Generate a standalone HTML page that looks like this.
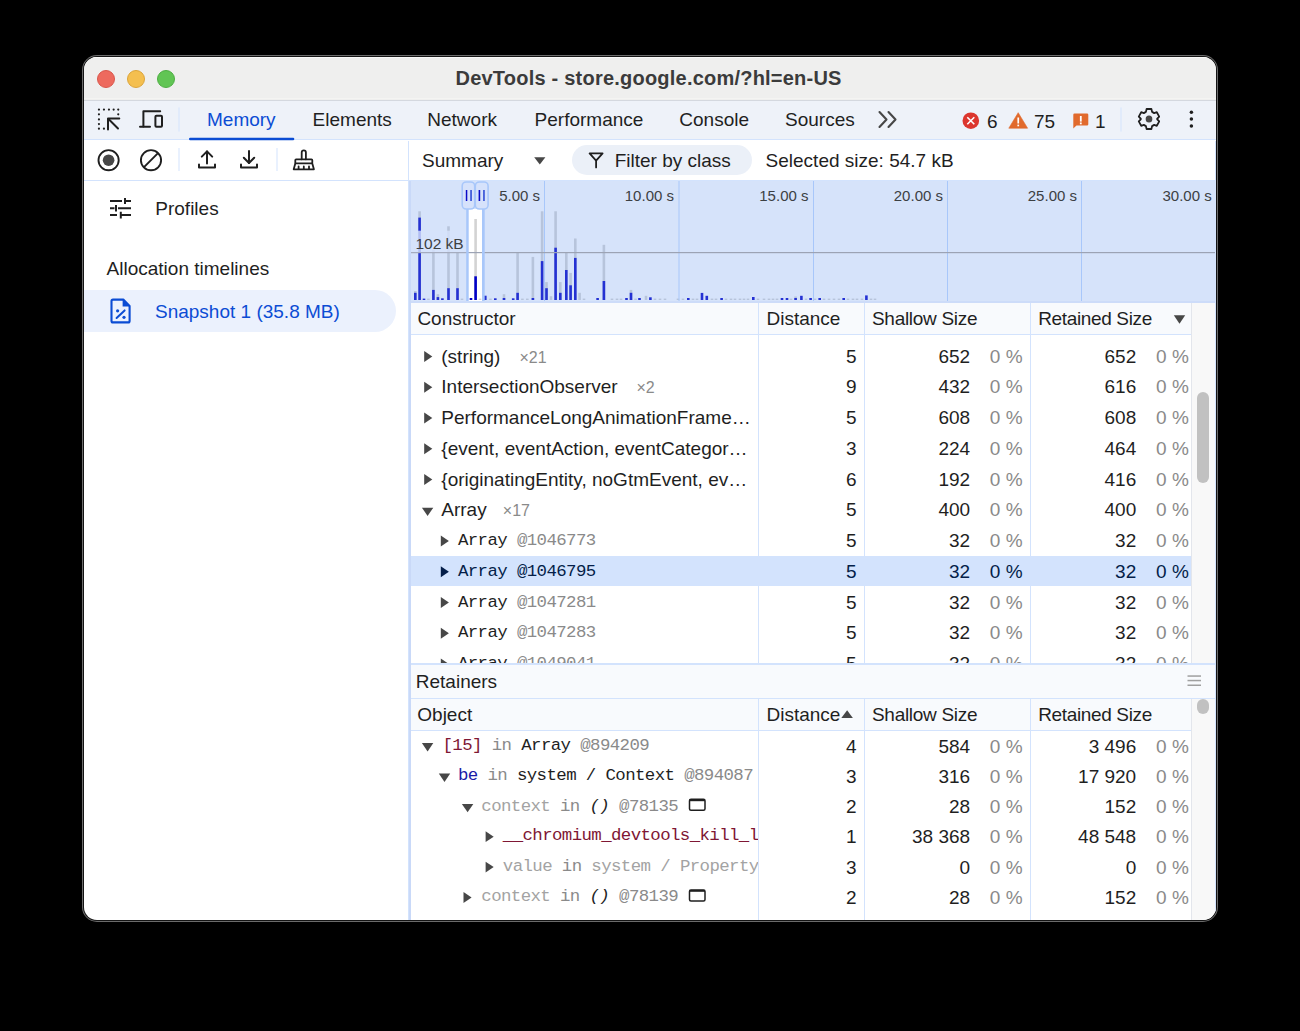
<!DOCTYPE html>
<html><head><meta charset="utf-8">
<style>
html,body{margin:0;padding:0;width:1300px;height:1031px;background:#000;overflow:hidden}
#frame{position:absolute;left:82px;top:55px;width:1136px;height:867px;border-radius:15px;background:#6b6b6b}
#ring{position:absolute;left:1px;top:1px;width:1134px;height:865px;border-radius:14px;background:#141414}
#win{position:absolute;left:1px;top:1px;width:1132px;height:863px;border-radius:13px;overflow:hidden;background:#fff}
#pg{position:absolute;left:-84px;top:-57px;width:1300px;height:1031px}
.a{position:absolute}
.s{position:absolute;font-family:"Liberation Sans",sans-serif;font-size:19px;line-height:22px;white-space:pre;color:#1f1f1f}
.m{position:absolute;font-family:"Liberation Mono",monospace;font-size:17.4px;letter-spacing:-0.6px;line-height:22px;white-space:pre;color:#1f1f1f}
.r{text-align:right}
.g{color:#8a8a8a}
.hl{position:absolute;height:1px;background:#d3e3fd}
.vl{position:absolute;width:1px;background:#d3e3fd}
</style></head><body>
<div id="frame"><div id="ring"><div id="win"><div id="pg">

<!-- title bar -->
<div class="a" style="left:0;top:0;width:1300px;height:100px;background:#efefee"></div>
<div class="a" style="left:84px;top:57px;width:1132px;height:1px;background:#fafafa"></div>
<div class="a" style="left:0;top:98px;width:1300px;height:1px;background:#f4f4f2"></div>
<div class="a" style="left:0;top:100px;width:1300px;height:1px;background:#d4d8df"></div>
<div class="a" style="left:97px;top:69.5px;width:18px;height:18px;border-radius:50%;background:#ed6a5e;box-sizing:border-box;border:0.5px solid #d9574b"></div>
<div class="a" style="left:127px;top:69.5px;width:18px;height:18px;border-radius:50%;background:#f4bf4f;box-sizing:border-box;border:0.5px solid #dba43a"></div>
<div class="a" style="left:157px;top:69.5px;width:18px;height:18px;border-radius:50%;background:#61c554;box-sizing:border-box;border:0.5px solid #4eae43"></div>
<div class="s" style="left:455.5px;top:66.6px;font-weight:bold;font-size:20px;color:#3b3b3b;letter-spacing:0.22px">DevTools - store.google.com/?hl=en-US</div>

<!-- tab bar -->
<div class="a" style="left:0;top:101px;width:1300px;height:38px;background:#eef2f9"></div>
<div class="hl" style="left:0;top:139px;width:1300px"></div>


<!-- tab bar content -->
<svg class="a" style="left:0;top:0" width="1300" height="181" viewBox="0 0 1300 181">
  <g fill="#1f1f1f">
    <circle cx="98.95" cy="109.55" r="1.1"/><circle cx="103.95" cy="109.55" r="1.1"/><circle cx="108.95" cy="109.55" r="1.1"/><circle cx="113.65" cy="109.55" r="1.1"/><circle cx="118.25" cy="109.55" r="1.1"/>
    <circle cx="98.95" cy="114.35" r="1.1"/><circle cx="98.95" cy="119.45" r="1.1"/><circle cx="98.95" cy="124.05" r="1.1"/><circle cx="98.95" cy="128.65" r="1.1"/>
    <circle cx="118.25" cy="114.35" r="1.1"/><circle cx="103.95" cy="128.65" r="1.1"/>
  </g>
  <g stroke="#1f1f1f" stroke-width="2" fill="none" stroke-linecap="round" stroke-linejoin="round">
    <path d="M118 128.5 L108.5 119"/>
    <path d="M119.3 118.6 H108 V129.6"/>
    <path d="M160.2 111.2 H143.4 V126.5"/>
    <path d="M140 126.8 H150"/>
    <rect x="155.4" y="115.8" width="6.6" height="11" rx="1"/>
  </g>
  <rect x="178.5" y="107.5" width="1" height="24" fill="#d3e3fd"/>
  <rect x="189" y="137.8" width="105.3" height="2.4" rx="1.2" fill="#0b4cd4"/>
  <!-- chevrons -->
  <g stroke="#474747" stroke-width="2.1" fill="none" stroke-linecap="round" stroke-linejoin="round">
    <path d="M879.5 112 L886.5 119.5 L879.5 127"/>
    <path d="M888.5 112 L895.5 119.5 L888.5 127"/>
  </g>
  <!-- error -->
  <circle cx="970.8" cy="120.7" r="8.3" fill="#dc362e"/>
  <path d="M967.3 117.2 L974.3 124.2 M974.3 117.2 L967.3 124.2" stroke="#fff" stroke-width="1.6"/>
  <!-- warning -->
  <path d="M1018.2 112.7 L1027.6 128.2 H1008.8 Z" fill="#e16a2d" stroke="#e16a2d" stroke-width="0.6" stroke-linejoin="round"/>
  <rect x="1017.4" y="117.5" width="1.7" height="6" fill="#fff"/><rect x="1017.4" y="124.6" width="1.7" height="1.7" fill="#fff"/>
  <!-- issue -->
  <path d="M1074.5 113.5 H1087 Q1088.3 113.5 1088.3 114.8 V124.3 Q1088.3 125.6 1087 125.6 H1076.5 L1073.3 128.4 V114.8 Q1073.3 113.5 1074.5 113.5 Z" fill="#e16a2d"/>
  <rect x="1079.9" y="116" width="1.8" height="5.6" fill="#fff"/><rect x="1079.9" y="122.5" width="1.8" height="1.8" fill="#fff"/>
  <rect x="1120.5" y="107.5" width="1" height="24" fill="#d3e3fd"/>
  <!-- gear -->
  <g transform="translate(1149 119) scale(0.93 0.98)">
    <path d="M-2.6 -10.2 H2.6 L3.3 -7.3 L5.6 -6 L8.4 -6.9 L11 -2.4 L8.8 -0.3 V0.3 L11 2.4 L8.4 6.9 L5.6 6 L3.3 7.3 L2.6 10.2 H-2.6 L-3.3 7.3 L-5.6 6 L-8.4 6.9 L-11 2.4 L-8.8 0.3 V-0.3 L-11 -2.4 L-8.4 -6.9 L-5.6 -6 L-3.3 -7.3 Z" fill="none" stroke="#1f1f1f" stroke-width="1.9" stroke-linejoin="round"/>
    <circle r="3.6" fill="#474747"/>
  </g>
  <circle cx="1191.4" cy="112.3" r="1.75" fill="#1f1f1f"/><circle cx="1191.4" cy="119.1" r="1.75" fill="#1f1f1f"/><circle cx="1191.4" cy="126" r="1.75" fill="#1f1f1f"/>

  <!-- toolbar -->
  <circle cx="108.6" cy="160.2" r="10.1" fill="none" stroke="#1f1f1f" stroke-width="1.9"/>
  <circle cx="108.6" cy="160.2" r="5.8" fill="#474747"/>
  <circle cx="151" cy="160.2" r="10.1" fill="none" stroke="#1f1f1f" stroke-width="1.9"/>
  <path d="M144 167.2 L158 153.2" stroke="#1f1f1f" stroke-width="1.9"/>
  <rect x="178.5" y="148" width="1" height="23" fill="#d3e3fd"/>
  <g stroke="#1f1f1f" stroke-width="2" fill="none" stroke-linecap="round" stroke-linejoin="round">
    <path d="M199 164.6 V167.6 H215 V164.6"/>
    <path d="M207 163.6 V151.4"/><path d="M201.8 156.6 L207 151.4 L212.2 156.6"/>
    <path d="M241 164.6 V167.6 H257 V164.6"/>
    <path d="M249 151 V163"/><path d="M243.8 157.8 L249 163 L254.2 157.8"/>
  </g>
  <rect x="276.5" y="148" width="1" height="23" fill="#d3e3fd"/>
  <g stroke="#1f1f1f" stroke-width="1.8" fill="none" stroke-linejoin="round" stroke-linecap="round">
    <path d="M301.7 159.3 V152.4 Q301.7 150.4 303.8 150.4 Q305.9 150.4 305.9 152.4 V159.3"/>
    <rect x="295.3" y="159.4" width="17" height="4" rx="0.8"/>
    <path d="M295.3 163.4 L293.7 169.3 H313.9 L312.3 163.4"/>
    <path d="M298.6 166.4 V169 M303.8 166.4 V169 M309 166.4 V169"/>
  </g>
  <!-- summary dropdown -->
  <path d="M534.2 157.2 H545.4 L539.8 164.6 Z" fill="#474747"/>
  <rect x="572" y="145" width="180" height="30" rx="15" fill="#ebf0f8"/>
  <path d="M589.6 153.4 H602.6 L596.1 160.6 Z M596.1 160.6 V167.4" fill="none" stroke="#1f1f1f" stroke-width="1.8" stroke-linejoin="round" stroke-linecap="round"/>
</svg>
<div class="s" style="left:207px;top:109px;color:#0b4cd4">Memory</div>
<div class="s" style="left:312.6px;top:109px">Elements</div>
<div class="s" style="left:427.3px;top:109px">Network</div>
<div class="s" style="left:534.6px;top:109px">Performance</div>
<div class="s" style="left:679.3px;top:109px">Console</div>
<div class="s" style="left:785px;top:109px">Sources</div>
<div class="s" style="left:987px;top:110.5px">6</div>
<div class="s" style="left:1034px;top:110.5px">75</div>
<div class="s" style="left:1095px;top:110.5px">1</div>
<div class="hl" style="left:0;top:180px;width:1300px"></div>
<div class="s" style="left:422px;top:149.5px">Summary</div>
<div class="s" style="left:614.7px;top:149.5px">Filter by class</div>
<div class="s" style="left:765.6px;top:149.5px">Selected size: 54.7 kB</div>
<div class="vl" style="left:408px;top:141px;height:780px"></div>

<!-- sidebar -->
<div class="a" style="left:84px;top:290px;width:311.8px;height:41.6px;border-radius:0 21px 21px 0;background:#ebf1fd"></div>
<svg class="a" style="left:0;top:180px" width="408" height="160" viewBox="0 180 408 160">
  <g stroke="#1f1f1f" stroke-width="2" fill="none">
    <path d="M110 201 H122 M125 198 V204 M125 201 H131"/>
    <path d="M110 208.3 H114.5 M116 205 V211.5 M118 208.3 H131"/>
    <path d="M110 215 H117 M120.8 211.8 V218.5 M120.8 215 H131"/>
  </g>
  <path d="M113 299.6 H123.3 L129.6 305.9 V320.9 Q129.6 322.4 128.1 322.4 H113 Q111.5 322.4 111.5 320.9 V301.1 Q111.5 299.6 113 299.6 Z" fill="none" stroke="#0b4cd4" stroke-width="2.1" stroke-linejoin="round"/>
  <path d="M122.6 299.6 L129.6 306.6 H122.6 Z" fill="#0b4cd4"/>
  <path d="M116.6 318 L124.6 310.4" stroke="#0b4cd4" stroke-width="2" stroke-linecap="round"/>
  <circle cx="117.6" cy="310.8" r="1.6" fill="#0b4cd4"/><circle cx="124" cy="317.3" r="1.6" fill="#0b4cd4"/>
</svg>
<div class="s" style="left:155.3px;top:197.8px">Profiles</div>
<div class="s" style="left:106.6px;top:258.4px">Allocation timelines</div>
<div class="s" style="left:155px;top:301.4px;color:#0b4cd4">Snapshot 1 (35.8 MB)</div>

<!-- overview -->
<svg class="a" style="left:0;top:0" width="1300" height="310" viewBox="0 0 1300 310">
  <rect x="409" y="181" width="807" height="121" fill="#fff"/>
  <rect x="414.0" y="291" width="2.6" height="9.0" fill="#d3d3d3"/>
<rect x="414.0" y="292.8" width="2.6" height="7.2" fill="#0000c8"/>
<rect x="418.3" y="211.3" width="2.6" height="88.7" fill="#d3d3d3"/>
<rect x="418.3" y="217.6" width="2.6" height="82.4" fill="#0000c8"/>
<rect x="422.7" y="298.6" width="2.6" height="1.4" fill="#0000c8"/>
<rect x="427.1" y="298.6" width="2.6" height="1.4" fill="#d3d3d3"/>
<rect x="432.1" y="249.6" width="2.6" height="50.4" fill="#d3d3d3"/>
<rect x="432.1" y="289.9" width="2.6" height="10.1" fill="#0000c8"/>
<rect x="436.6" y="294.2" width="2.6" height="5.8" fill="#d3d3d3"/>
<rect x="436.6" y="297.1" width="2.6" height="2.9" fill="#0000c8"/>
<rect x="441.1" y="298.3" width="2.6" height="1.7" fill="#0000c8"/>
<rect x="447.2" y="226.3" width="2.6" height="73.7" fill="#d3d3d3"/>
<rect x="447.2" y="288.2" width="2.6" height="11.8" fill="#0000c8"/>
<rect x="456.2" y="252.5" width="2.6" height="47.5" fill="#d3d3d3"/>
<rect x="456.2" y="288.2" width="2.6" height="11.8" fill="#0000c8"/>
<rect x="460.7" y="298.6" width="2.6" height="1.4" fill="#d3d3d3"/>
<rect x="469.7" y="298" width="2.6" height="2.0" fill="#0000c8"/>
<rect x="474.3" y="219" width="2.6" height="81.0" fill="#d3d3d3"/>
<rect x="474.3" y="276.3" width="2.6" height="23.7" fill="#0000c8"/>
<rect x="478.7" y="298.6" width="2.6" height="1.4" fill="#d3d3d3"/>
<rect x="484.0" y="295.7" width="2.6" height="4.3" fill="#0000c8"/>
<rect x="489.1" y="298.6" width="2.6" height="1.4" fill="#d3d3d3"/>
<rect x="494.0" y="298.3" width="2.6" height="1.7" fill="#0000c8"/>
<rect x="502.7" y="294.2" width="2.6" height="5.8" fill="#d3d3d3"/>
<rect x="502.7" y="298" width="2.6" height="2.0" fill="#0000c8"/>
<rect x="511.9" y="298.3" width="2.6" height="1.7" fill="#0000c8"/>
<rect x="516.3" y="252.5" width="2.6" height="47.5" fill="#d3d3d3"/>
<rect x="516.3" y="292.8" width="2.6" height="7.2" fill="#0000c8"/>
<rect x="521.1" y="298.6" width="2.6" height="1.4" fill="#d3d3d3"/>
<rect x="526.0" y="298.6" width="2.6" height="1.4" fill="#d3d3d3"/>
<rect x="531.6" y="256.9" width="2.6" height="43.1" fill="#d3d3d3"/>
<rect x="531.6" y="298" width="2.6" height="2.0" fill="#0000c8"/>
<rect x="540.8" y="211.3" width="2.6" height="88.7" fill="#d3d3d3"/>
<rect x="540.8" y="261.1" width="2.6" height="38.9" fill="#0000c8"/>
<rect x="545.2" y="282.1" width="2.6" height="17.9" fill="#d3d3d3"/>
<rect x="545.2" y="288.2" width="2.6" height="11.8" fill="#0000c8"/>
<rect x="549.7" y="296.2" width="2.6" height="3.8" fill="#d3d3d3"/>
<rect x="554.3" y="211.3" width="2.6" height="88.7" fill="#d3d3d3"/>
<rect x="554.3" y="247.7" width="2.6" height="52.3" fill="#0000c8"/>
<rect x="559.0" y="282.1" width="2.6" height="17.9" fill="#d3d3d3"/>
<rect x="559.0" y="292.8" width="2.6" height="7.2" fill="#0000c8"/>
<rect x="565.0" y="252.5" width="2.6" height="47.5" fill="#d3d3d3"/>
<rect x="565.0" y="270" width="2.6" height="30.0" fill="#0000c8"/>
<rect x="569.3" y="272.9" width="2.6" height="27.1" fill="#d3d3d3"/>
<rect x="569.3" y="285.3" width="2.6" height="14.7" fill="#0000c8"/>
<rect x="574.0" y="238.5" width="2.6" height="61.5" fill="#d3d3d3"/>
<rect x="574.0" y="257.9" width="2.6" height="42.1" fill="#0000c8"/>
<rect x="578.3" y="292.8" width="2.6" height="7.2" fill="#d3d3d3"/>
<rect x="582.7" y="298.6" width="2.6" height="1.4" fill="#d3d3d3"/>
<rect x="596.3" y="298" width="2.6" height="2.0" fill="#0000c8"/>
<rect x="602.6" y="244.8" width="2.6" height="55.2" fill="#d3d3d3"/>
<rect x="602.6" y="281" width="2.6" height="19.0" fill="#0000c8"/>
<rect x="610.7" y="298.6" width="2.6" height="1.4" fill="#d3d3d3"/>
<rect x="615.7" y="298.6" width="2.6" height="1.4" fill="#d3d3d3"/>
<rect x="619.7" y="298.6" width="2.6" height="1.4" fill="#d3d3d3"/>
<rect x="625.2" y="298" width="2.6" height="2.0" fill="#0000c8"/>
<rect x="629.7" y="289.9" width="2.6" height="10.1" fill="#d3d3d3"/>
<rect x="629.7" y="292.8" width="2.6" height="7.2" fill="#0000c8"/>
<rect x="634.2" y="298.6" width="2.6" height="1.4" fill="#d3d3d3"/>
<rect x="638.2" y="298" width="2.6" height="2.0" fill="#0000c8"/>
<rect x="644.7" y="295.8" width="2.6" height="4.2" fill="#d3d3d3"/>
<rect x="649.1" y="297.3" width="2.6" height="2.7" fill="#0000c8"/>
<rect x="653.7" y="298.6" width="2.6" height="1.4" fill="#d3d3d3"/>
<rect x="658.7" y="298.6" width="2.6" height="1.4" fill="#d3d3d3"/>
<rect x="663.7" y="298.6" width="2.6" height="1.4" fill="#d3d3d3"/>
<rect x="676.7" y="298.6" width="2.6" height="1.4" fill="#d3d3d3"/>
<rect x="681.7" y="298.6" width="2.6" height="1.4" fill="#d3d3d3"/>
<rect x="687.0" y="298" width="2.6" height="2.0" fill="#0000c8"/>
<rect x="691.7" y="298.6" width="2.6" height="1.4" fill="#d3d3d3"/>
<rect x="695.7" y="298.6" width="2.6" height="1.4" fill="#d3d3d3"/>
<rect x="700.7" y="292.9" width="2.6" height="7.1" fill="#0000c8"/>
<rect x="705.5" y="295.8" width="2.6" height="4.2" fill="#0000c8"/>
<rect x="710.7" y="298.6" width="2.6" height="1.4" fill="#d3d3d3"/>
<rect x="714.7" y="298.6" width="2.6" height="1.4" fill="#d3d3d3"/>
<rect x="720.3" y="298" width="2.6" height="2.0" fill="#0000c8"/>
<rect x="724.7" y="298.6" width="2.6" height="1.4" fill="#d3d3d3"/>
<rect x="729.7" y="298.6" width="2.6" height="1.4" fill="#d3d3d3"/>
<rect x="733.7" y="298.6" width="2.6" height="1.4" fill="#d3d3d3"/>
<rect x="738.7" y="298.6" width="2.6" height="1.4" fill="#d3d3d3"/>
<rect x="742.7" y="298.6" width="2.6" height="1.4" fill="#d3d3d3"/>
<rect x="746.7" y="298.6" width="2.6" height="1.4" fill="#d3d3d3"/>
<rect x="752.0" y="297" width="2.6" height="3.0" fill="#0000c8"/>
<rect x="756.7" y="298.6" width="2.6" height="1.4" fill="#d3d3d3"/>
<rect x="762.7" y="298.6" width="2.6" height="1.4" fill="#d3d3d3"/>
<rect x="767.7" y="298.6" width="2.6" height="1.4" fill="#d3d3d3"/>
<rect x="771.7" y="298.6" width="2.6" height="1.4" fill="#d3d3d3"/>
<rect x="775.7" y="298.6" width="2.6" height="1.4" fill="#d3d3d3"/>
<rect x="780.7" y="298" width="2.6" height="2.0" fill="#0000c8"/>
<rect x="785.7" y="298" width="2.6" height="2.0" fill="#0000c8"/>
<rect x="789.7" y="298.6" width="2.6" height="1.4" fill="#d3d3d3"/>
<rect x="794.3" y="296.5" width="2.6" height="3.5" fill="#d3d3d3"/>
<rect x="794.3" y="298" width="2.6" height="2.0" fill="#0000c8"/>
<rect x="800.1" y="295.8" width="2.6" height="4.2" fill="#0000c8"/>
<rect x="804.7" y="298.6" width="2.6" height="1.4" fill="#d3d3d3"/>
<rect x="809.3" y="298" width="2.6" height="2.0" fill="#0000c8"/>
<rect x="813.7" y="298.6" width="2.6" height="1.4" fill="#d3d3d3"/>
<rect x="818.4" y="298" width="2.6" height="2.0" fill="#0000c8"/>
<rect x="822.7" y="298.6" width="2.6" height="1.4" fill="#d3d3d3"/>
<rect x="827.7" y="298.6" width="2.6" height="1.4" fill="#d3d3d3"/>
<rect x="832.7" y="298.6" width="2.6" height="1.4" fill="#d3d3d3"/>
<rect x="837.7" y="298.6" width="2.6" height="1.4" fill="#d3d3d3"/>
<rect x="842.4" y="298" width="2.6" height="2.0" fill="#0000c8"/>
<rect x="846.7" y="298.6" width="2.6" height="1.4" fill="#d3d3d3"/>
<rect x="851.7" y="298.6" width="2.6" height="1.4" fill="#d3d3d3"/>
<rect x="855.7" y="298.6" width="2.6" height="1.4" fill="#d3d3d3"/>
<rect x="860.7" y="298.6" width="2.6" height="1.4" fill="#d3d3d3"/>
<rect x="865.1" y="295.4" width="2.6" height="4.6" fill="#0000c8"/>
<rect x="869.7" y="298.6" width="2.6" height="1.4" fill="#d3d3d3"/>
<rect x="873.7" y="298.6" width="2.6" height="1.4" fill="#d3d3d3"/>
  <rect x="409" y="181" width="59" height="121" fill="rgba(118,162,238,0.3)"/>
  <rect x="482" y="181" width="734" height="121" fill="rgba(118,162,238,0.3)"/>
  <rect x="468" y="181" width="14" height="28" fill="rgba(118,162,238,0.3)"/>
  <g fill="#a8c7fa">
    <rect x="544" y="181" width="1" height="121"/><rect x="678.5" y="181" width="1" height="121"/><rect x="813" y="181" width="1" height="121"/><rect x="947" y="181" width="1" height="121"/><rect x="1081" y="181" width="1" height="121"/>
  </g>
  <rect x="409" y="252" width="807" height="1.2" fill="#9ca3b4"/>
  <rect x="409" y="230.7" width="57" height="21.5" fill="rgba(214,226,251,0.8)"/>
  <rect x="466.2" y="206" width="2.5" height="96" fill="#a8c7fa"/>
  <rect x="482" y="206" width="2.7" height="96" fill="#a8c7fa"/>
  <rect x="462.2" y="182" width="12.5" height="27" rx="4" fill="#d6e2fb" stroke="#a8c7fa" stroke-width="1.6"/>
  <rect x="475.3" y="182" width="12.8" height="27" rx="4" fill="#d6e2fb" stroke="#a8c7fa" stroke-width="1.6"/>
  <rect x="465.8" y="190" width="1.5" height="11" fill="#0a0ac8"/><rect x="470.2" y="190" width="1.7" height="11" fill="#3a55d8"/>
  <rect x="478.6" y="190" width="1.6" height="11" fill="#0a0ac8"/><rect x="483.1" y="190" width="1.7" height="11" fill="#3a55d8"/>
</svg>
<div class="a" style="left:409px;top:183px;width:807px;height:30px;font:15px 'Liberation Sans';color:#3c4043;white-space:pre;line-height:22px">
<span class="a" style="right:676px;top:2px">5.00 s</span><span class="a" style="right:542px;top:2px">10.00 s</span><span class="a" style="right:407.5px;top:2px">15.00 s</span><span class="a" style="right:273px;top:2px">20.00 s</span><span class="a" style="right:139px;top:2px">25.00 s</span><span class="a" style="right:4.2999999999999545px;top:2px">30.00 s</span>
</div>
<div class="a" style="left:415.4px;top:232.6px;font:15.5px 'Liberation Sans';line-height:22px;color:#3c4043;white-space:pre">102 kB</div>








<!-- GRID -->
<div class="a" style="left:409px;top:302.5px;width:782px;height:31.5px;background:#f8fafd"></div>
<div class="hl" style="left:409px;top:334px;width:782px"></div>
<div class="a" style="left:1191px;top:302px;width:25px;height:361px;background:#f8f8f8;border-left:1px solid #ececec;box-sizing:border-box"></div>
<div class="a" style="left:1197px;top:392px;width:12.3px;height:91px;border-radius:6px;background:#c1c1c1"></div>
<div class="a" style="left:409px;top:556.3px;width:782px;height:29.6px;background:#d3e3fd"></div>
<div class="vl" style="left:758.2px;top:302px;height:361px"></div>
<div class="vl" style="left:864.3px;top:302px;height:361px"></div>
<div class="vl" style="left:1030.4px;top:302px;height:361px"></div>
<div class="a" style="left:1191px;top:302px;width:1px;height:361px;background:#e3e6ec"></div>
<div class="s" style="left:417.4px;top:308px">Constructor</div>
<div class="s" style="left:766.5px;top:308px">Distance</div>
<div class="s" style="left:872px;top:308px;letter-spacing:-0.3px">Shallow Size</div>
<div class="s" style="left:1038.2px;top:308px;letter-spacing:-0.35px">Retained Size</div>
<div class="a" style="left:409px;top:335px;width:782px;height:328px;overflow:hidden"><div class="a" style="left:-409px;top:-335px;width:1300px;height:1031px">
<div class="s" style="left:441.3px;top:345.50px">(string)</div>
<div class="s" style="left:519.5px;top:346.50px;color:#8a8a8a;font-size:16px">×21</div>
<div class="s r" style="right:443.4px;top:345.50px;color:#1f1f1f">5</div>
<div class="s r" style="right:329.9px;top:345.50px;color:#1f1f1f">652</div>
<div class="s r" style="right:277.4px;top:345.50px;color:#8a8a8a">0 %</div>
<div class="s r" style="right:163.79999999999995px;top:345.50px;color:#1f1f1f">652</div>
<div class="s r" style="right:111.20000000000005px;top:345.50px;color:#8a8a8a">0 %</div>
<div class="s" style="left:441.3px;top:376.25px">IntersectionObserver</div>
<div class="s" style="left:636.4px;top:377.25px;color:#8a8a8a;font-size:16px">×2</div>
<div class="s r" style="right:443.4px;top:376.25px;color:#1f1f1f">9</div>
<div class="s r" style="right:329.9px;top:376.25px;color:#1f1f1f">432</div>
<div class="s r" style="right:277.4px;top:376.25px;color:#8a8a8a">0 %</div>
<div class="s r" style="right:163.79999999999995px;top:376.25px;color:#1f1f1f">616</div>
<div class="s r" style="right:111.20000000000005px;top:376.25px;color:#8a8a8a">0 %</div>
<div class="s" style="left:441.3px;top:407.00px">PerformanceLongAnimationFrame…</div>
<div class="s r" style="right:443.4px;top:407.00px;color:#1f1f1f">5</div>
<div class="s r" style="right:329.9px;top:407.00px;color:#1f1f1f">608</div>
<div class="s r" style="right:277.4px;top:407.00px;color:#8a8a8a">0 %</div>
<div class="s r" style="right:163.79999999999995px;top:407.00px;color:#1f1f1f">608</div>
<div class="s r" style="right:111.20000000000005px;top:407.00px;color:#8a8a8a">0 %</div>
<div class="s" style="left:441.3px;top:437.75px">{event, eventAction, eventCategor…</div>
<div class="s r" style="right:443.4px;top:437.75px;color:#1f1f1f">3</div>
<div class="s r" style="right:329.9px;top:437.75px;color:#1f1f1f">224</div>
<div class="s r" style="right:277.4px;top:437.75px;color:#8a8a8a">0 %</div>
<div class="s r" style="right:163.79999999999995px;top:437.75px;color:#1f1f1f">464</div>
<div class="s r" style="right:111.20000000000005px;top:437.75px;color:#8a8a8a">0 %</div>
<div class="s" style="left:441.3px;top:468.50px">{originatingEntity, noGtmEvent, ev…</div>
<div class="s r" style="right:443.4px;top:468.50px;color:#1f1f1f">6</div>
<div class="s r" style="right:329.9px;top:468.50px;color:#1f1f1f">192</div>
<div class="s r" style="right:277.4px;top:468.50px;color:#8a8a8a">0 %</div>
<div class="s r" style="right:163.79999999999995px;top:468.50px;color:#1f1f1f">416</div>
<div class="s r" style="right:111.20000000000005px;top:468.50px;color:#8a8a8a">0 %</div>
<div class="s" style="left:441.3px;top:499.25px">Array</div>
<div class="s" style="left:502.8px;top:500.25px;color:#8a8a8a;font-size:16px">×17</div>
<div class="s r" style="right:443.4px;top:499.25px;color:#1f1f1f">5</div>
<div class="s r" style="right:329.9px;top:499.25px;color:#1f1f1f">400</div>
<div class="s r" style="right:277.4px;top:499.25px;color:#8a8a8a">0 %</div>
<div class="s r" style="right:163.79999999999995px;top:499.25px;color:#1f1f1f">400</div>
<div class="s r" style="right:111.20000000000005px;top:499.25px;color:#8a8a8a">0 %</div>
<div class="m" style="left:457.9px;top:530.20px;color:#1f1f1f">Array <span style="color:#8a8a8a">@1046773</span></div>
<div class="s r" style="right:443.4px;top:530.00px;color:#1f1f1f">5</div>
<div class="s r" style="right:329.9px;top:530.00px;color:#1f1f1f">32</div>
<div class="s r" style="right:277.4px;top:530.00px;color:#8a8a8a">0 %</div>
<div class="s r" style="right:163.79999999999995px;top:530.00px;color:#1f1f1f">32</div>
<div class="s r" style="right:111.20000000000005px;top:530.00px;color:#8a8a8a">0 %</div>
<div class="m" style="left:457.9px;top:560.95px;color:#041e49">Array <span style="color:#041e49">@1046795</span></div>
<div class="s r" style="right:443.4px;top:560.75px;color:#041e49">5</div>
<div class="s r" style="right:329.9px;top:560.75px;color:#041e49">32</div>
<div class="s r" style="right:277.4px;top:560.75px;color:#041e49">0 %</div>
<div class="s r" style="right:163.79999999999995px;top:560.75px;color:#041e49">32</div>
<div class="s r" style="right:111.20000000000005px;top:560.75px;color:#041e49">0 %</div>
<div class="m" style="left:457.9px;top:591.70px;color:#1f1f1f">Array <span style="color:#8a8a8a">@1047281</span></div>
<div class="s r" style="right:443.4px;top:591.50px;color:#1f1f1f">5</div>
<div class="s r" style="right:329.9px;top:591.50px;color:#1f1f1f">32</div>
<div class="s r" style="right:277.4px;top:591.50px;color:#8a8a8a">0 %</div>
<div class="s r" style="right:163.79999999999995px;top:591.50px;color:#1f1f1f">32</div>
<div class="s r" style="right:111.20000000000005px;top:591.50px;color:#8a8a8a">0 %</div>
<div class="m" style="left:457.9px;top:622.45px;color:#1f1f1f">Array <span style="color:#8a8a8a">@1047283</span></div>
<div class="s r" style="right:443.4px;top:622.25px;color:#1f1f1f">5</div>
<div class="s r" style="right:329.9px;top:622.25px;color:#1f1f1f">32</div>
<div class="s r" style="right:277.4px;top:622.25px;color:#8a8a8a">0 %</div>
<div class="s r" style="right:163.79999999999995px;top:622.25px;color:#1f1f1f">32</div>
<div class="s r" style="right:111.20000000000005px;top:622.25px;color:#8a8a8a">0 %</div>
<div class="m" style="left:457.9px;top:653.20px;color:#1f1f1f">Array <span style="color:#8a8a8a">@1049041</span></div>
<div class="s r" style="right:443.4px;top:653.00px;color:#1f1f1f">5</div>
<div class="s r" style="right:329.9px;top:653.00px;color:#1f1f1f">32</div>
<div class="s r" style="right:277.4px;top:653.00px;color:#8a8a8a">0 %</div>
<div class="s r" style="right:163.79999999999995px;top:653.00px;color:#1f1f1f">32</div>
<div class="s r" style="right:111.20000000000005px;top:653.00px;color:#8a8a8a">0 %</div>
<svg class="a" style="left:0;top:0" width="1300" height="700" viewBox="0 0 1300 700"><g fill="#474747"><path d="M424.2 351.10 L432.3 356.50 L424.2 361.90 Z" /><path d="M424.2 381.85 L432.3 387.25 L424.2 392.65 Z" /><path d="M424.2 412.60 L432.3 418.00 L424.2 423.40 Z" /><path d="M424.2 443.35 L432.3 448.75 L424.2 454.15 Z" /><path d="M424.2 474.10 L432.3 479.50 L424.2 484.90 Z" /><path d="M421.9 507.65 H433.3 L427.6 516.05 Z"/><path d="M440.8 535.60 L448.9 541.00 L440.8 546.40 Z" /><path d="M440.8 566.35 L448.9 571.75 L440.8 577.15 Z" fill="#041e49"/><path d="M440.8 597.10 L448.9 602.50 L440.8 607.90 Z" /><path d="M440.8 627.85 L448.9 633.25 L440.8 638.65 Z" /><path d="M440.8 658.60 L448.9 664.00 L440.8 669.40 Z" /></g></svg>
</div></div>
<div class="a" style="left:409px;top:663px;width:807px;height:2px;background:#d3e3fd"></div>
<div class="a" style="left:409px;top:665px;width:807px;height:33px;background:#f8fafd"></div>
<div class="hl" style="left:409px;top:697.5px;width:807px"></div>
<div class="s" style="left:415.8px;top:670.7px">Retainers</div>
<svg class="a" style="left:1186px;top:674px" width="16" height="14" viewBox="0 0 16 14"><g fill="#a0a0a0"><rect x="1.5" y="1.3" width="13.5" height="1.5"/><rect x="1.5" y="5.8" width="13.5" height="1.5"/><rect x="1.5" y="10.5" width="13.5" height="1.5"/></g></svg>
<div class="a" style="left:409px;top:698.5px;width:782px;height:31px;background:#f8fafd"></div>
<div class="hl" style="left:409px;top:729.6px;width:782px"></div>
<div class="a" style="left:1191px;top:698.5px;width:25px;height:230px;background:#f8f8f8;border-left:1px solid #ececec;box-sizing:border-box"></div>
<div class="a" style="left:1197px;top:699.3px;width:12.3px;height:14.4px;border-radius:6px;background:#c1c1c1"></div>
<div class="vl" style="left:758.2px;top:698.5px;height:230px"></div>
<div class="vl" style="left:864.3px;top:698.5px;height:230px"></div>
<div class="vl" style="left:1030.4px;top:698.5px;height:230px"></div>
<div class="a" style="left:1191px;top:698.5px;width:1px;height:230px;background:#e3e6ec"></div>
<div class="s" style="left:417.3px;top:703.6px">Object</div>
<div class="s" style="left:766.5px;top:703.6px">Distance</div>
<div class="s" style="left:872px;top:703.6px;letter-spacing:-0.3px">Shallow Size</div>
<div class="s" style="left:1038.2px;top:703.6px;letter-spacing:-0.35px">Retained Size</div>
<div class="a" style="left:409px;top:730.5px;width:349px;height:190px;overflow:hidden"><div class="a" style="left:-409px;top:-730.5px;width:1300px;height:1031px">
<div class="m" style="left:442.5px;top:734.70px"><span style="color:#7f1734">[15]</span> <span style="color:#8a8a8a">in</span> Array <span style="color:#8a8a8a">@894209</span></div>
<div class="m" style="left:457.9px;top:765.20px"><span style="color:#1a1aa6">be</span> <span style="color:#8a8a8a">in</span> system / Context <span style="color:#8a8a8a">@894087</span></div>
<div class="m" style="left:481.3px;top:795.60px"><span style="color:#a3a3a3">context</span> <span style="color:#8a8a8a">in</span> <i>()</i> <span style="color:#8a8a8a">@78135</span></div>
<div class="m" style="left:502.8px;top:825.40px"><span style="color:#7f1734">__chromium_devtools_kill_live_regexp</span></div>
<div class="m" style="left:502.8px;top:855.80px"><span style="color:#a3a3a3">value</span> <span style="color:#8a8a8a">in</span> <span style="color:#a3a3a3">system / PropertyCell</span></div>
<div class="m" style="left:481.3px;top:886.20px"><span style="color:#a3a3a3">context</span> <span style="color:#8a8a8a">in</span> <i>()</i> <span style="color:#8a8a8a">@78139</span></div>
<svg class="a" style="left:0;top:0" width="1300" height="1031" viewBox="0 0 1300 1031"><g fill="#474747"><path d="M421.9 743.00 H433.3 L427.6 751.40 Z"/><path d="M438.8 773.50 H450.2 L444.5 781.90 Z"/><path d="M461.9 803.90 H473.3 L467.6 812.30 Z"/><path d="M485.6 831.30 L493.7 836.70 L485.6 842.10 Z"/><path d="M485.6 861.70 L493.7 867.10 L485.6 872.50 Z"/><path d="M463.5 892.10 L471.6 897.50 L463.5 902.90 Z"/></g>
<rect x="689.5" y="799.3" width="15.5" height="11" rx="1.5" fill="none" stroke="#1f1f1f" stroke-width="1.5"/><rect x="689.5" y="799.3" width="15.5" height="1.9" fill="#1f1f1f"/>
<rect x="689.5" y="889.9" width="15.5" height="11" rx="1.5" fill="none" stroke="#1f1f1f" stroke-width="1.5"/><rect x="689.5" y="889.9" width="15.5" height="1.9" fill="#1f1f1f"/>
</svg></div></div>
<svg class="a" style="left:0;top:0" width="1300" height="760" viewBox="0 0 1300 760"><g fill="#474747">
<path d="M1173.8 315.2 H1185.2 L1179.5 323.8 Z"/>
<path d="M841.3 718.1 H852.9 L847.1 710.2 Z"/>
</g></svg>
<div class="s r" style="right:443.4px;top:735.50px">4</div>
<div class="s r" style="right:329.9px;top:735.50px">584</div>
<div class="s r" style="right:277.4px;top:735.50px;color:#8a8a8a">0 %</div>
<div class="s r" style="right:163.79999999999995px;top:735.50px">3 496</div>
<div class="s r" style="right:111.20000000000005px;top:735.50px;color:#8a8a8a">0 %</div>
<div class="s r" style="right:443.4px;top:766.00px">3</div>
<div class="s r" style="right:329.9px;top:766.00px">316</div>
<div class="s r" style="right:277.4px;top:766.00px;color:#8a8a8a">0 %</div>
<div class="s r" style="right:163.79999999999995px;top:766.00px">17 920</div>
<div class="s r" style="right:111.20000000000005px;top:766.00px;color:#8a8a8a">0 %</div>
<div class="s r" style="right:443.4px;top:796.40px">2</div>
<div class="s r" style="right:329.9px;top:796.40px">28</div>
<div class="s r" style="right:277.4px;top:796.40px;color:#8a8a8a">0 %</div>
<div class="s r" style="right:163.79999999999995px;top:796.40px">152</div>
<div class="s r" style="right:111.20000000000005px;top:796.40px;color:#8a8a8a">0 %</div>
<div class="s r" style="right:443.4px;top:826.20px">1</div>
<div class="s r" style="right:329.9px;top:826.20px">38 368</div>
<div class="s r" style="right:277.4px;top:826.20px;color:#8a8a8a">0 %</div>
<div class="s r" style="right:163.79999999999995px;top:826.20px">48 548</div>
<div class="s r" style="right:111.20000000000005px;top:826.20px;color:#8a8a8a">0 %</div>
<div class="s r" style="right:443.4px;top:856.60px">3</div>
<div class="s r" style="right:329.9px;top:856.60px">0</div>
<div class="s r" style="right:277.4px;top:856.60px;color:#8a8a8a">0 %</div>
<div class="s r" style="right:163.79999999999995px;top:856.60px">0</div>
<div class="s r" style="right:111.20000000000005px;top:856.60px;color:#8a8a8a">0 %</div>
<div class="s r" style="right:443.4px;top:887.00px">2</div>
<div class="s r" style="right:329.9px;top:887.00px">28</div>
<div class="s r" style="right:277.4px;top:887.00px;color:#8a8a8a">0 %</div>
<div class="s r" style="right:163.79999999999995px;top:887.00px">152</div>
<div class="s r" style="right:111.20000000000005px;top:887.00px;color:#8a8a8a">0 %</div>
<div class="a" style="left:409px;top:301px;width:807px;height:1.5px;background:#cddcf9"></div>
<div class="a" style="left:409px;top:181px;width:1.5px;height:740px;background:#c9d9f8"></div>
<div class="vl" style="left:1215px;top:141px;height:780px"></div>
</div></div></div></div>
</body></html>
